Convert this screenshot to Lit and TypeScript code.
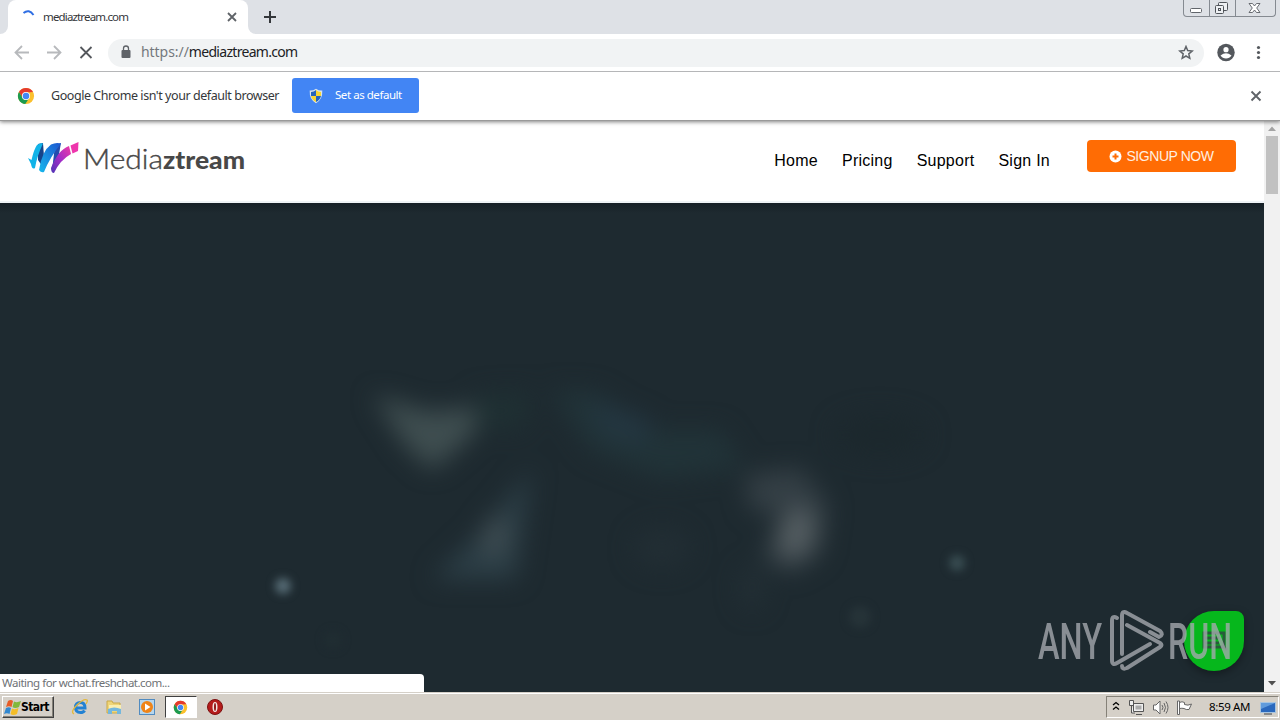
import { LitElement, html, css, svg } from 'lit';
import { customElement } from 'lit/decorators.js';

const chromeLogo = svg`
	<circle cx="10" cy="10" r="9" fill="#fbc02d" />
	<path d="M2.2 5.5A9 9 0 0 1 17.8 5.5L10 6A4.2 4.2 0 0 0 6 8.5L6.2 12Z" fill="#e53a2e" />
	<path d="M2.2 5.5A9 9 0 0 0 9.2 19L13.6 12.1A4.2 4.2 0 0 1 6.4 12.1Z" fill="#1c9b50" />
	<circle cx="10" cy="10" r="4.5" fill="#fff" />
	<circle cx="10" cy="10" r="3.6" fill="#4387f5" />
`;

@customElement('browser-top')
export class BrowserTop extends LitElement {
	static styles = css`
		:host {
			display: block;
			position: relative;
			z-index: 1;
			background: #fff;
			color: #35373a;
			font-family: 'Noto Sans', 'Open Sans', sans-serif;
			box-shadow: 0 1px 4px rgba(0, 0, 0, 0.5);
		}
		svg {
			display: block;
			flex: none;
		}
		.tabs {
			height: 34px;
			display: flex;
			align-items: flex-start;
			background: #dee1e6;
		}
		.tab-left {
			width: 8px;
			height: 34px;
			background: #dee1e6;
			border-radius: 0 0 8px 0;
		}
		.corner {
			background: #fff;
		}
		.grow {
			flex: 1;
		}
		.tab {
			width: 240px;
			height: 34px;
			box-sizing: border-box;
			padding: 0 10px 0 12px;
			display: flex;
			align-items: center;
			background: #fff;
			border-radius: 8px 8px 0 0;
		}
		.tab-title {
			flex: 1;
			padding: 0 0 1px 7px;
			font-size: 11.5px;
			letter-spacing: -0.85px;
			white-space: nowrap;
		}
		.after {
			height: 34px;
			display: flex;
			align-items: center;
			padding-left: 14px;
			background: #dee1e6;
			border-radius: 0 0 0 8px;
		}
		.window-buttons {
			width: 93px;
			height: 17px;
			box-sizing: border-box;
			margin: 0 4px 17px auto;
			display: flex;
			border: 1px solid #858a91;
			border-top: 0;
			border-radius: 0 0 4px 4px;
		}
		.window-buttons svg + svg {
			border-left: 1px solid #858a91;
		}
		.toolbar {
			height: 37px;
			display: flex;
			align-items: center;
			padding: 0 12px 0 13px;
			border-bottom: 1px solid #b5b6b8;
		}
		.nav-icon {
			margin-right: 14px;
		}
		.address {
			width: 1096px;
			height: 28px;
			box-sizing: border-box;
			padding: 0 10px 0 12px;
			display: flex;
			align-items: center;
			background: #f1f3f4;
			border-radius: 14px;
		}
		.url {
			flex: 1;
			padding: 0 0 2px 9px;
			font-size: 14px;
			letter-spacing: -0.5px;
			color: #202124;
		}
		.scheme {
			color: #74787d;
			letter-spacing: -0.05px;
		}
		.domain {
			letter-spacing: -0.7px;
		}
		.user {
			margin: 0 12px 0 12px;
		}
		.info {
			height: 48px;
			display: flex;
			align-items: center;
			padding: 0 18px 0 17px;
			border-bottom: 1px solid #999;
		}
		.message {
			flex: none;
			box-sizing: border-box;
			width: 257px;
			padding: 0 0 2px 16px;
			font-size: 12.5px;
			letter-spacing: -0.44px;
			white-space: nowrap;
		}
		.default {
			width: 127px;
			height: 35px;
			margin-bottom: 1px;
			padding: 0 0 0 17px;
			border: 0;
			border-radius: 3px;
			display: flex;
			align-items: center;
			gap: 12px;
			background: #4285f4;
			color: #fff;
			font: 11.5px 'Noto Sans', sans-serif;
			letter-spacing: -0.45px;
			white-space: nowrap;
		}
		.default-text {
			padding-bottom: 2px;
		}
		.dismiss {
			margin-left: auto;
		}
	`;

	render() {
		return html`
			<div class="tabs">
				<div class="corner"><div class="tab-left"></div></div>
				<div class="tab">
					<svg width="16" height="16" fill="none" stroke="#2f6fe4" stroke-width="2">
						<path d="M3.5 4Q9 -.3 13.5 6" />
					</svg>
					<span class="tab-title">mediaztream.com</span>
					<svg width="12" height="12" stroke="#5f6368" stroke-width="1.8">
						<path d="M2 2L10 10M10 2L2 10" />
					</svg>
				</div>
				<div class="corner grow">
					<div class="after">
						<svg width="16" height="16" stroke="#34373b" stroke-width="2">
							<path d="M2 8H14M8 2V14" />
						</svg>
						<div class="window-buttons">
							<svg width="25" height="16" fill="#fff" stroke="#61656b">
								<rect x="6.5" y="8.5" width="11" height="4" rx="1" />
							</svg>
							<svg width="25" height="16" fill="#eef0f3" stroke="#50545a">
								<rect x="8.5" y="2.5" width="9" height="8" rx="1" />
								<rect x="5.5" y="5.5" width="8" height="8" rx="1" />
								<rect x="8.5" y="8.5" width="2" height="2" />
							</svg>
							<svg width="41" height="16" fill="#fff" stroke="#5b5f65" stroke-width=".9">
								<path
									d="M13 3.5H16.5L18.5 6L20.5 3.5H24L20.7 8L24 12.5H20.5L18.5 10L16.5 12.5H13L16.3 8Z"
								/>
							</svg>
						</div>
					</div>
				</div>
			</div>
			<div class="toolbar">
				<svg class="nav-icon" width="18" height="18" fill="none" stroke="#b7b9bc" stroke-width="1.8">
					<path d="M16 8.5H3M9 2L2.5 8.5L9 15" />
				</svg>
				<svg class="nav-icon" width="18" height="18" fill="none" stroke="#b7b9bc" stroke-width="1.8">
					<path d="M2 8.5H15M9 2L15.5 8.5L9 15" />
				</svg>
				<svg class="nav-icon" width="17" height="18" stroke="#54575c" stroke-width="1.8">
					<path d="M3.5 3L14.5 14M14.5 3L3.5 14" />
				</svg>
				<div class="address">
					<svg width="12" height="16" fill="#5f6368">
						<rect x="1.5" y="5" width="9" height="8" rx="1" />
						<path d="M3.5 5.5V3.5A2.5 2.5 0 0 1 8.5 3.5V5.5" fill="none" stroke="#5f6368" stroke-width="1.3" />
					</svg>
					<span class="url"><span class="scheme">https://</span><span class="domain">mediaztream.com</span></span>
					<svg width="16" height="16" fill="none" stroke="#5f6368" stroke-width="1.5">
						<path d="M8 1.5L9.7 5.6L14.2 6L10.8 8.9L11.8 13.3L8 11L4.2 13.3L5.2 8.9L1.8 6L6.3 5.6Z" />
					</svg>
				</div>
				<svg class="user" width="20" height="20">
					<circle cx="10" cy="9.5" r="8.7" fill="#54585d" />
					<circle cx="10" cy="6.7" r="2.6" fill="#fff" />
					<path d="M4.5 12.5Q10 8.2 15.5 12.5Q13.5 15.5 10 15.5Q6.5 15.5 4.5 12.5Z" fill="#fff" />
				</svg>
				<svg width="20" height="20" fill="#54585d">
					<circle cx="10.5" cy="4.5" r="1.6" />
					<circle cx="10.5" cy="9.5" r="1.6" />
					<circle cx="10.5" cy="14.5" r="1.6" />
				</svg>
			</div>
			<div class="info">
				<svg width="18" height="18" viewBox="0 0 20 20">${chromeLogo}</svg>
				<span class="message">Google Chrome isn't your default browser</span>
				<button class="default">
					<svg width="14" height="16">
						<path d="M7 .7Q10 2.8 13.3 2.5Q13.8 11.5 7 15.2Q.2 11.5 .7 2.5Q4 2.8 7 .7Z" fill="#d8e4ec" />
						<path d="M7 2V8H2V4Q5 4 7 2M7 8H12Q11 12 7 14Z" fill="#2464bd" />
						<path d="M7 2Q9 4 12 4V8H7ZM2 8H7V14Q3 12 2 8Z" fill="#f6d534" />
					</svg>
					<span class="default-text">Set as default</span>
				</button>
				<svg class="dismiss" width="12" height="12" stroke="#5f6368" stroke-width="1.9">
					<path d="M1.5 1.5L10.5 10.5M10.5 1.5L1.5 10.5" />
				</svg>
			</div>
		`;
	}
}

@customElement('site-page')
export class SitePage extends LitElement {
	static styles = css`
		:host {
			display: flex;
			min-height: 0;
			position: relative;
			background: #1e2a30;
		}
		.content {
			flex: 1;
			display: flex;
			flex-direction: column;
		}
		header {
			height: 82px;
			box-sizing: border-box;
			padding: 19px 28px 0 28px;
			display: flex;
			align-items: flex-start;
			background: #fff;
			border-bottom: 2px solid #eff3f6;
		}
		.logo {
			margin: 1px auto 0 0;
			font-family: Lato, sans-serif;
		}
		nav {
			display: flex;
			gap: 24px;
			padding-top: 12px;
			margin-right: 37px;
		}
		nav a {
			color: #000;
			font: 16px/18px 'Liberation Sans', Arial, sans-serif;
			letter-spacing: 0.25px;
			white-space: nowrap;
		}
		.signup {
			width: 149px;
			height: 32px;
			padding: 0;
			border: 0;
			border-radius: 4px;
			display: flex;
			align-items: center;
			justify-content: center;
			gap: 4px;
			background: #ff6c04;
			color: #ffefe0;
			font: 14px 'Liberation Sans', Arial, sans-serif;
			letter-spacing: -0.45px;
			white-space: nowrap;
		}
		.hero {
			flex: 1;
			display: block;
			width: 1264px;
			background: #1e2a30;
		}
		.scroll {
			width: 16px;
			display: flex;
			flex-direction: column;
			background: #f1f1f1;
		}
		.thumb {
			height: 58px;
			margin: 0 2px;
			background: #c1c1c1;
		}
		.down {
			margin-top: auto;
		}
		.chat {
			position: absolute;
			left: 1184px;
			top: 490px;
			width: 60px;
			height: 60px;
			border-radius: 50% 8px 50% 50%;
			background: #06b71c;
			box-shadow: 0 3px 8px rgba(0, 0, 0, 0.35);
		}
		.watermark {
			position: absolute;
			left: 1030px;
			top: 480px;
			overflow: visible;
			font-family: Roboto, sans-serif;
		}
		.status {
			position: absolute;
			left: 0;
			bottom: 0;
			width: 424px;
			height: 18px;
			box-sizing: border-box;
			padding-left: 2px;
			border-radius: 0 4px 0 0;
			background: #fff;
			color: #6e7175;
			font: 11.5px/18px 'Noto Sans', sans-serif;
			letter-spacing: -0.5px;
		}
	`;

	render() {
		return html`
			<div class="content">
				<header>
					<svg class="logo" width="220" height="36" viewBox="28 141 220 36">
						<defs>
							<linearGradient id="pink" x1="0" y1="1" x2="1" y2="0">
								<stop offset="0" stop-color="#4d35b5" />
								<stop offset=".5" stop-color="#a52cc8" />
								<stop offset="1" stop-color="#f03ba4" />
							</linearGradient>
							<linearGradient id="blue" x1="0" y1="1" x2="1" y2="0">
								<stop offset="0" stop-color="#16b9ed" />
								<stop offset="1" stop-color="#1d55d0" />
							</linearGradient>
						</defs>
						<path d="M38 144L43 143L45 170L38 160Z" fill="#16438b" />
						<path d="M55 145L61 143L57 165L52 171Z" fill="#234cae" />
						<path d="M28 158L31.5 160Q34 149 37 145Q40 142.5 43 143.5Q37 156 35 168Q32 170 31 164Z" fill="#11b3e8" />
						<path d="M39 170Q42 151 51 144.5Q56 142 61 143.5Q50 157 44 172Q41 173 39 170Z" fill="url(#blue)" />
						<path d="M51 168Q58 150 69 146L71 154Q60 160 54 173Q51 173 51 168Z" fill="url(#pink)" />
						<path d="M70.5 145.5L78.5 142L78 151L72.5 153.5Z" fill="#ee36ac" />
						<text
							x="83"
							y="169"
							font-size="26.5"
							fill="#484848"
							stroke="#484848"
							stroke-width=".4"
							font-weight="300"
							textLength="80"
							lengthAdjust="spacingAndGlyphs"
						>
							Media
						</text>
						<text
							x="163"
							y="169"
							font-size="25.5"
							fill="#484848"
							font-weight="900"
							textLength="82"
							lengthAdjust="spacingAndGlyphs"
						>
							ztream
						</text>
					</svg>
					<nav><a>Home</a><a>Pricing</a><a>Support</a><a>Sign In</a></nav>
					<button class="signup">
						<svg width="13" height="13">
							<circle cx="6.5" cy="6.5" r="6" fill="#fff" />
							<path d="M3.5 6.5H9.5M6.5 3.5V9.5" stroke="#ff6c04" stroke-width="2" />
						</svg>
						<span>SIGNUP NOW</span>
					</button>
				</header>
				<svg class="hero" viewBox="0 203 1264 489">
					<defs>
						<linearGradient id="top" x1="0" y1="0" x2="0" y2="1">
							<stop offset="0" stop-color="#162026" />
							<stop offset="1" stop-color="#1e2a30" />
						</linearGradient>
						<filter id="soft" x="-50%" y="-50%" width="200%" height="200%" color-interpolation-filters="sRGB">
							<feGaussianBlur stdDeviation="12" />
						</filter>
						<filter id="dot" x="-100%" y="-100%" width="300%" height="300%" color-interpolation-filters="sRGB">
							<feGaussianBlur stdDeviation="4" />
						</filter>
					</defs>
					<rect y="203" width="1264" height="10" fill="url(#top)" />
					<g filter="url(#soft)">
						<path d="M373 395L430 412L482 406L472 436L432 470L405 445Z" fill="#3f4e50" />
						<path d="M475 395L530 392L525 428L478 428Z" fill="#1f3033" />
						<path d="M550 390L595 392L655 430L720 430L745 468L660 478L590 450Z" fill="#213338" />
						<path d="M585 400L650 420L650 442L610 438Z" fill="#243742" />
						<path d="M532 468L516 579L432 579L478 535Z" fill="#2c3e46" />
						<path d="M490 515L508 525L502 555L480 552Z" fill="#414e53" />
						<path d="M745 475L800 468L828 505L820 555L790 573L762 558L785 515L750 510Z" fill="#343f45" />
						<ellipse cx="796" cy="533" rx="18" ry="26" fill="#555e62" transform="rotate(15 796 533)" />
						<ellipse cx="662" cy="548" rx="28" ry="20" fill="#222e34" />
						<ellipse cx="752" cy="588" rx="12" ry="22" fill="#232f35" />
						<ellipse cx="880" cy="435" rx="45" ry="20" fill="#1c282d" />
					</g>
					<g filter="url(#dot)">
						<circle cx="283" cy="586" r="8" fill="#556a73" />
						<circle cx="957" cy="563" r="8" fill="#384c51" />
						<circle cx="860" cy="617" r="11" fill="#263338" />
						<circle cx="333" cy="640" r="9" fill="#202d32" />
					</g>
				</svg>
			</div>
			<div class="scroll">
				<svg width="16" height="15"><path d="M4 10L8 5.5L12 10Z" fill="#a3a3a3" /></svg>
				<div class="thumb"></div>
				<svg class="down" width="16" height="16"><path d="M4 5L8 9.5L12 5Z" fill="#505050" /></svg>
			</div>
			<div class="chat">
				<svg width="60" height="60" fill="none" stroke="#285c3a" stroke-width="3">
					<path d="M20 22H40V36H20Z M20 27H35M20 32H35M40 36L43 39" />
				</svg>
			</div>
			<svg class="watermark" width="230" height="80" viewBox="1030 601 230 80" fill="#a7abb0" opacity=".78">
				<text x="1038" y="659" font-size="50" font-weight="500" textLength="64" lengthAdjust="spacingAndGlyphs">ANY</text>
				<text x="1168" y="659" font-size="50" font-weight="500" textLength="64" lengthAdjust="spacingAndGlyphs">RUN</text>
				<g fill="none" stroke="#a7abb0" stroke-width="4" stroke-linejoin="round" stroke-linecap="round">
					<path d="M1117 618Q1112 615 1112 621V660Q1112 666 1117 663L1150 644" />
					<path d="M1122 654V616Q1122 610 1127 613L1160 631Q1164 635 1159 637L1150 632" />
					<path d="M1127 625L1160 643Q1163 645 1160 647L1127 668Q1122 670 1122 666" />
				</g>
			</svg>
			<div class="status">Waiting for wchat.freshchat.com...</div>
		`;
	}
}

@customElement('task-bar')
export class TaskBar extends LitElement {
	static styles = css`
		:host {
			height: 28px;
			box-sizing: border-box;
			padding: 2px 0 1px 2px;
			display: flex;
			align-items: center;
			background: #d5d0c8;
			border-top: 1px solid #d5d0c8;
			box-shadow: inset 0 1px #fff;
			color: #000;
		}
		svg {
			display: block;
			flex: none;
		}
		.start {
			width: 52px;
			height: 22px;
			box-sizing: border-box;
			padding: 0 0 0 1px;
			display: flex;
			align-items: center;
			border: 1px solid;
			border-color: #fff #404040 #404040 #fff;
			box-shadow: inset -1px -1px #858178;
			background: #d5d0c8;
			font: bold 12px 'DejaVu Sans Condensed', 'DejaVu Sans', sans-serif;
			letter-spacing: -0.6px;
		}
		.apps {
			flex: 1;
			display: flex;
			align-items: center;
			padding-left: 17px;
			gap: 15.5px;
		}
		.active {
			width: 32px;
			height: 22px;
			box-sizing: border-box;
			display: flex;
			align-items: center;
			justify-content: center;
			margin: 0 -6px 0 -7px;
			background: #fff;
			border: 1px solid;
			border-color: #404040 #fff #fff #404040;
		}
		.tray {
			width: 173px;
			height: 22px;
			box-sizing: border-box;
			padding: 0 2px 0 4px;
			margin-right: 1px;
			display: flex;
			align-items: center;
			border: 1px solid;
			border-color: #858178 #fff #fff #858178;
		}
		.tray svg {
			margin-right: 7px;
		}
		.time {
			flex: 1;
			padding: 0 0 1px 9px;
			font: 11.5px 'Noto Sans', sans-serif;
			letter-spacing: -0.35px;
			white-space: nowrap;
		}
		.tray .screen {
			margin-right: 0;
		}
	`;

	render() {
		return html`
			<div class="start">
				<svg width="17" height="17">
					<path d="M4 2Q7 0 9 2L7.5 8Q5 6.5 2 8Z" fill="#e75c27" />
					<path d="M10 2.5Q13 4 17 2L15 8Q11 10 8.5 8Z" fill="#82b83b" />
					<path d="M2 9Q5 7.5 7 9L5.5 15Q3 13.5 0 15Z" fill="#3288d0" />
					<path d="M8 9.5Q11 11 14.5 9L13 15Q9 17 6.5 15Z" fill="#f4bd27" />
				</svg>
				Start
			</div>
			<div class="apps">
				<svg width="18" height="18" fill="none">
					<path
						d="M5 10H14Q14 4.5 9.5 4.5Q4.5 4.5 4.5 9.5Q4.5 14.5 9.5 14.5Q12.5 14.5 13.5 12.5"
						stroke="#2382d3"
						stroke-width="3"
					/>
					<path d="M3 16Q-1 14 6 7Q13 0 16 2Q17 3 15 6" stroke="#e4b83a" stroke-width="1.3" />
				</svg>
				<svg width="18" height="18">
					<path d="M2 3H7L8 5H15V15H2Z" fill="#efd578" stroke="#c9a849" />
					<path d="M4 7H16V11H4Z" fill="#fbeeb0" />
					<path d="M3 16V11Q9 8 16 11V16H12V13H7V16Z" fill="#74b7dd" />
				</svg>
				<svg width="18" height="18">
					<rect x="1.5" y="1.5" width="15" height="15" fill="#b6d6ed" stroke="#518bc0" />
					<circle cx="9" cy="9" r="6" fill="#ef8418" />
					<path d="M7 5.5L12.5 9L7 12.5Z" fill="#fff" />
				</svg>
				<div class="active"><svg width="15" height="15" viewBox="0 0 20 20">${chromeLogo}</svg></div>
				<svg width="18" height="18">
					<circle cx="9" cy="9" r="7.5" fill="#b51b1b" stroke="#7c1111" />
					<ellipse cx="9" cy="9" rx="2.5" ry="5" fill="#f3e4e2" />
					<ellipse cx="9" cy="9" rx="1" ry="4" fill="#8d1515" />
				</svg>
			</div>
			<div class="tray">
				<svg width="10" height="14" fill="none" stroke="#000" stroke-width="1.3">
					<path d="M2 5L5 2.5L8 5M2 9.5L5 7L8 9.5" />
				</svg>
				<svg width="17" height="17" fill="#eee" stroke="#555">
					<path d="M5.5 4.5H15.5V12.5H5.5ZM8 15.5H14M1.5 1.5H5.5V6.5H1.5ZM3.5 6V14H7" />
					<rect x="7.5" y="6.5" width="6" height="4" fill="#aaa" stroke="none" />
				</svg>
				<svg width="17" height="17" fill="#fff" stroke="#666">
					<path d="M1.5 6H4L8 2V15L4 11H1.5Z" />
					<path d="M10 6Q12 8.5 10 11M12 4Q15 8.5 12 13M14 2.5Q18 8.5 14 14.5" fill="none" />
				</svg>
				<svg width="17" height="17" fill="#fff" stroke="#666">
					<path d="M1.5 2V15.5H3.5V2ZM3.5 3.5Q6 2 8.5 3.5V5.5Q12 7 15.5 5L13 10.5Q10 11 8 9.5Q6 9 3.5 9.5Z" />
				</svg>
				<span class="time">8:59 AM</span>
				<svg class="screen" width="17" height="17">
					<rect x="1.5" y="3.5" width="15" height="10" fill="#2a68bd" stroke="#a7c4df" />
					<path d="M2 4H16L2 10Z" fill="#609bdc" />
					<path d="M5 15H13" stroke="#39414b" />
				</svg>
			</div>
		`;
	}
}

@customElement('app-root')
export class AppRoot extends LitElement {
	static styles = css`
		:host {
			width: 1280px;
			height: 720px;
			display: flex;
			flex-direction: column;
			overflow: hidden;
		}
		browser-top,
		task-bar {
			flex: none;
		}
		site-page {
			flex: 1;
		}
	`;

	render() {
		return html`
			<browser-top></browser-top>
			<site-page></site-page>
			<task-bar></task-bar>
		`;
	}
}
